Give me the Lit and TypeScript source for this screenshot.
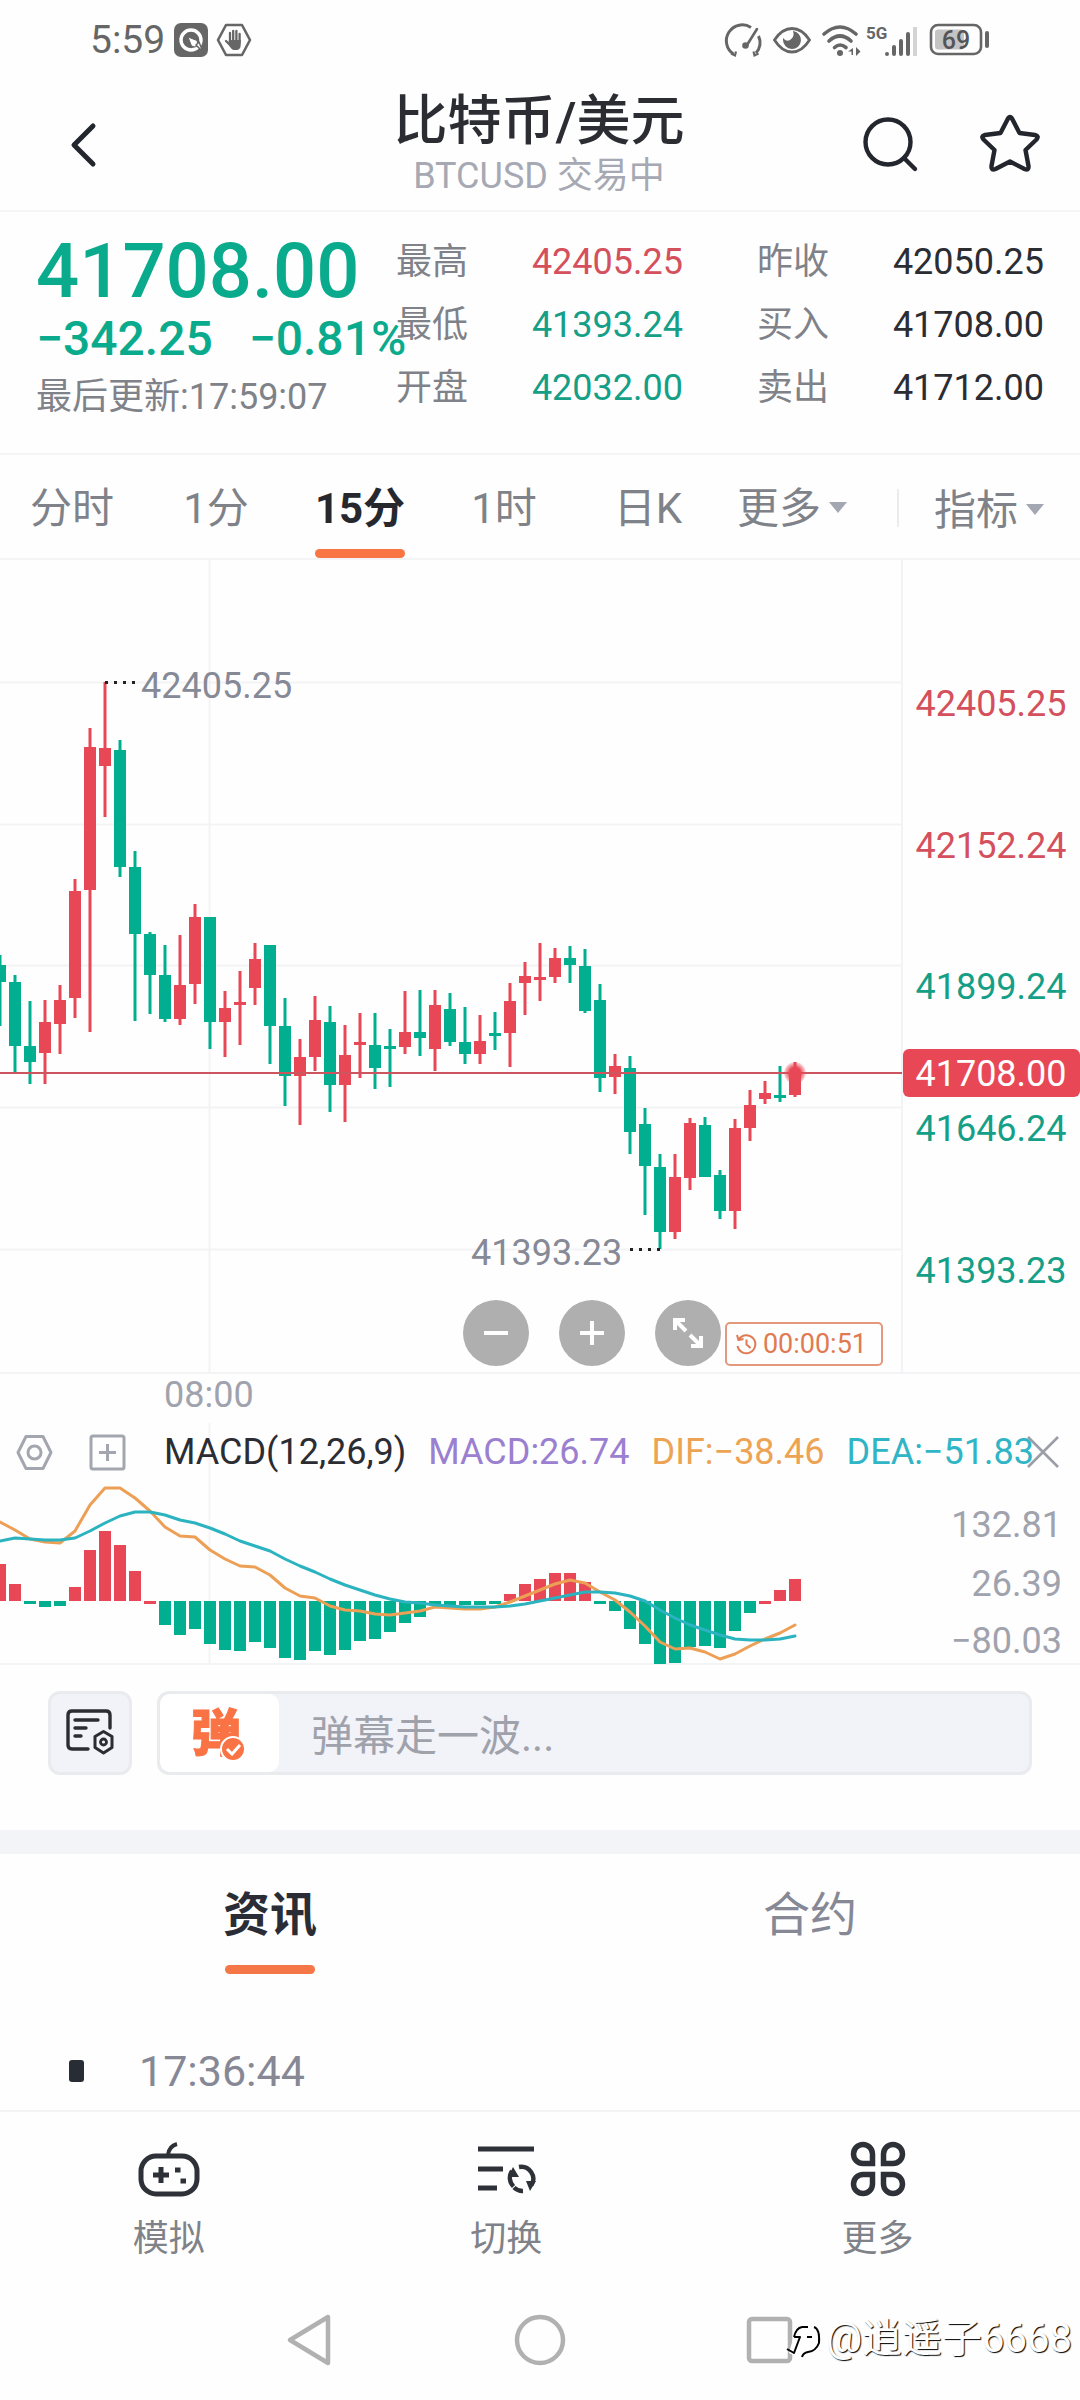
import { LitElement, html, css, svg } from "lit";
import { customElement, property, state } from "lit/decorators.js";
import { classMap } from "lit/directives/class-map.js";

type Candle = [up: 0 | 1, high: number, top: number, bottom: number, low: number];

// Candle edges in thirds of a pixel, measured from PLOT_OFFSET down.
const UNIT = 3;
const PLOT_OFFSET = 80;
const STEP = 15;
const BODY = 12;

const RED = "#e84855";
const GREEN = "#02ae90";

const CANDLES: Candle[] = [
  [0, 945, 975, 1027, 1158], [0, 1005, 1027, 1218, 1296], [0, 1083, 1218, 1266, 1332],
  [1, 1081, 1146, 1239, 1332], [1, 1034, 1079, 1151, 1242], [1, 718, 753, 1074, 1134],
  [1, 264, 320, 750, 1177], [1, 127, 323, 378, 532], [0, 301, 331, 681, 710],
  [0, 633, 680, 883, 1143], [0, 876, 882, 1005, 1123], [0, 915, 1005, 1137, 1146],
  [1, 884, 1034, 1137, 1156], [1, 792, 830, 1031, 1093], [0, 830, 830, 1145, 1228],
  [1, 1054, 1104, 1145, 1252], [1, 993, 1085, 1094, 1215], [1, 909, 956, 1044, 1094],
  [0, 916, 916, 1158, 1271], [0, 1074, 1158, 1308, 1397], [1, 1197, 1252, 1308, 1454],
  [1, 1068, 1140, 1251, 1292], [0, 1098, 1147, 1335, 1415], [1, 1155, 1245, 1335, 1446],
  [1, 1118, 1206, 1214, 1313], [0, 1120, 1215, 1284, 1346], [0, 1167, 1218, 1226, 1342],
  [1, 1052, 1177, 1220, 1242], [0, 1050, 1177, 1194, 1248], [1, 1051, 1095, 1226, 1292],
  [0, 1059, 1108, 1206, 1218], [0, 1101, 1207, 1242, 1273], [1, 1126, 1203, 1242, 1271],
  [0, 1117, 1180, 1188, 1230], [1, 1028, 1083, 1178, 1282], [1, 966, 1008, 1028, 1124],
  [1, 910, 1010, 1017, 1084], [1, 924, 954, 1010, 1029], [0, 918, 954, 976, 1030],
  [0, 928, 977, 1112, 1119], [0, 1032, 1080, 1314, 1356], [1, 1241, 1279, 1310, 1361],
  [0, 1248, 1284, 1475, 1541], [0, 1405, 1452, 1577, 1725], [0, 1542, 1581, 1775, 1828],
  [1, 1542, 1610, 1775, 1796], [1, 1434, 1449, 1614, 1650], [0, 1432, 1454, 1611, 1611],
  [0, 1591, 1604, 1714, 1737], [1, 1437, 1464, 1714, 1768], [1, 1349, 1395, 1464, 1502],
  [1, 1324, 1359, 1377, 1392], [0, 1277, 1365, 1374, 1385], [1, 1267, 1299, 1365, 1371],
];

const HIST = [
  37, 17, -3, -6, -5, 14, 51, 70, 56, 30, -3, -24, -34, -28, -43, -49, -50, -41, -47, -57,
  -59, -50, -54, -49, -40, -38, -31, -22, -16, -4, -4, -4, -4, -3, 7, 17, 22, 28, 28, 19,
  -3, -10, -28, -43, -63, -62, -46, -45, -47, -30, -12, -3, 11, 22,
];
const FADING_RED = new Set([10, 51]);

const DIF = [
  156, 180, 206, 216, 218, 183, 106, 53, 55, 84, 122, 171, 199, 202, 240, 267, 288, 290,
  316, 353, 377, 383, 409, 419, 423, 433, 434, 429, 424, 411, 413, 418, 416, 411, 397, 378,
  360, 342, 331, 338, 367, 389, 425, 467, 516, 536, 533, 546, 567, 551, 528, 508, 489, 466,
];
const DEA = [
  212, 205, 206, 209, 209, 203, 184, 158, 138, 127, 126, 135, 149, 159, 174, 192, 212, 228,
  244, 266, 288, 307, 327, 346, 361, 376, 388, 397, 400, 404, 407, 410, 411, 410, 407, 402,
  394, 385, 374, 366, 366, 369, 379, 394, 419, 445, 465, 479, 494, 506, 511, 511, 507, 498,
];

const sharedFont = css`
  :host {
    font-family: Roboto, "Noto Sans CJK SC", sans-serif;
    color: #2b2d33;
  }
  button {
    font: inherit;
    color: inherit;
    background: none;
    border: 0;
    padding: 0;
    margin: 0;
    cursor: pointer;
  }
  svg {
    display: block;
    overflow: visible;
  }
`;

@customElement("status-bar")
class StatusBar extends LitElement {
  static styles = [
    sharedFont,
    css`
      :host {
        display: block;
      }
      .bar {
        display: flex;
        align-items: center;
        justify-content: space-between;
        height: 80px;
        padding: 0 90px;
        box-sizing: border-box;
        color: #666;
      }
      .side {
        display: flex;
        align-items: center;
        gap: 9px;
      }
      .icons {
        gap: 11px;
      }
      .time {
        font-size: 39px;
        line-height: 80px;
      }
      .level {
        font-size: 25px;
        font-weight: 500;
      }
      .net {
        font-size: 17px;
        font-weight: 700;
      }
    `,
  ];
  render() {
    return html`
      <div class="bar">
        <div class="side">
          <span class="time">5:59</span>
          <svg width="34" height="34" viewBox="0 0 34 34">
            <rect width="34" height="34" rx="7" fill="#666" />
            <circle cx="17" cy="17" r="10" fill="none" stroke="#fff" stroke-width="3.4" />
            <path d="M14 14l9 3.500 1 5-3 1.500-3.500-1z" fill="#fff" stroke="#666" stroke-width="1" />
            <path d="M22 22l3-3 4 10z" fill="#fff" stroke="#666" stroke-width="1.500" />
          </svg>
          <svg width="34" height="34" viewBox="0 0 34 34">
            <path d="M9 2h16l8 15-8 15H9L1 17z" fill="none" stroke="#666" stroke-width="2.600" stroke-linejoin="round" />
            <path d="M13 20V10M16.200 18V8M19.400 18V8M22.600 19V11M9 18l4 4" stroke="#666" stroke-width="2.300" stroke-linecap="round" />
            <path d="M11.800 17h12v4q0 6-4.500 6h-2.300q-2.500 0-5.200-5z" fill="#666" />
          </svg>
        </div>
        <div class="side icons">
          <svg width="35" height="34" viewBox="0 0 35 34" fill="none" stroke="#666" stroke-width="3">
            <path d="M6.500 31A15 15 0 0 1 24 4.500M31.500 13A15 15 0 0 1 29 30" />
            <path d="M4 30.500l4 2 1-4M31.500 30.500l-4 2-1-4" stroke-width="2.200" />
            <path d="M30 6l-10 16" stroke-width="2.600" stroke-linecap="round" />
            <circle cx="18.500" cy="22.500" r="3.300" fill="#666" stroke="none" />
          </svg>
          <svg width="38" height="34" viewBox="0 0 38 34">
            <path d="M1.500 17Q9 5.500 19 5.500T36.500 17Q29 29 19 29T1.500 17z" fill="none" stroke="#666" stroke-width="2.800" />
            <path d="M20 8a9 9 0 1 1-10 9q0 0 0-2 3 4 7 2 5-3 3-9z" fill="#666" />
          </svg>
          <svg width="96" height="34" viewBox="0 0 96 34">
            <g fill="none" stroke="#666" stroke-width="3.600" stroke-linecap="round">
              <path d="M2 11Q18-3 34 11M7 18Q18 8 29 18M12.500 24.500Q18 19.500 24 24.500" />
            </g>
            <circle cx="18" cy="30" r="3" fill="#666" />
            <path d="M31 25v7h-1.500v-3.500H26zM34 24l4.500 4.500L34 33z" fill="#666" />
            <text class="net" x="44" y="16" fill="#666">5G</text>
            <g stroke="#666" stroke-width="4" stroke-linecap="round">
              <path d="M65 31v0M72 24v7M79 18v13M86 11v20" />
            </g>
            <path d="M93 4v29" stroke="#d4d4d4" stroke-width="4" />
          </svg>
          <svg width="61" height="34" viewBox="0 0 61 34">
            <rect x="2" y="2" width="50" height="29" rx="7" fill="none" stroke="#666" stroke-width="2.600" />
            <rect x="6" y="6.500" width="29" height="20" rx="3" fill="#c4c4c4" />
            <text class="level" x="27" y="26" text-anchor="middle" fill="#555">69</text>
            <path d="M58 10v13" stroke="#666" stroke-width="4" stroke-linecap="round" />
          </svg>
        </div>
      </div>
    `;
  }
}

@customElement("title-bar")
class TitleBar extends LitElement {
  static styles = [
    sharedFont,
    css`
      :host {
        display: block;
      }
      .bar {
        display: grid;
        grid-template-columns: 1fr auto 1fr;
        align-items: center;
        height: 130px;
        padding: 0 38px 0 36px;
        border-bottom: 2px solid #f5f5f5;
      }
      .titles {
        text-align: center;
        padding-bottom: 3px;
      }
      .name {
        margin: 0;
        font-size: 54px;
        line-height: 64px;
        font-weight: 500;
      }
      .code {
        margin: 0;
        font-size: 36px;
        line-height: 44px;
        color: #a6a9b3;
      }
      .back {
        justify-self: start;
      }
      .tools {
        justify-self: end;
        display: flex;
        gap: 56px;
      }
    `,
  ];
  render() {
    return html`
      <header class="bar">
        <button class="back" aria-label="返回">
          <svg width="64" height="64" viewBox="0 0 64 64" fill="none" stroke="#23262d" stroke-width="5" stroke-linecap="round" stroke-linejoin="round">
            <path d="M57 13L38 32l19 19" />
          </svg>
        </button>
        <div class="titles">
          <h1 class="name">比特币/美元</h1>
          <p class="code">BTCUSD 交易中</p>
        </div>
        <div class="tools">
          <button aria-label="搜索">
            <svg width="64" height="64" viewBox="0 0 64 64" fill="none" stroke="#23262d" stroke-width="4.400" stroke-linecap="round">
              <circle cx="30" cy="29" r="22.500" />
              <path d="M46 45l11 11" />
            </svg>
          </button>
          <button aria-label="自选">
            <svg width="64" height="64" viewBox="0 0 64 64" fill="none" stroke="#23262d" stroke-width="4.400" stroke-linejoin="round">
              <path d="M29.500 6.500Q32 1.500 34.500 6.500L41.500 20 57 22Q61.500 23 58.500 26.500L47.500 37 50.500 53Q51 58 46.500 56L32 48.500 17.500 56Q13 58 13.500 53L16.500 37 5.500 26.500Q2.500 23 7 22L22.500 20z" />
            </svg>
          </button>
        </div>
      </header>
    `;
  }
}

@customElement("quote-panel")
class QuotePanel extends LitElement {
  static styles = [
    sharedFont,
    css`
      :host {
        display: block;
      }
      .panel {
        display: flex;
        padding: 21px 36px 28px;
        border-bottom: 2px solid #f5f5f5;
      }
      .main {
        flex: 0 0 360px;
        min-width: 0;
        white-space: nowrap;
        color: #0aab8d;
      }
      .price {
        font-size: 76px;
        line-height: 76px;
        font-weight: 500;
      }
      .change {
        display: flex;
        gap: 36px;
        font-size: 48px;
        line-height: 60px;
        font-weight: 500;
      }
      .updated {
        font-size: 36px;
        line-height: 56px;
        color: #7f8288;
      }
      .stats {
        flex: 1;
        display: grid;
        grid-template-columns: 1fr 1fr;
        column-gap: 74px;
        align-content: start;
        margin: -2px 0 0;
        font-size: 36px;
        line-height: 63px;
      }
      .stat {
        display: flex;
        justify-content: space-between;
      }
      .label {
        color: #7f8288;
      }
      .value {
        margin: 0;
      }
      .up {
        color: #d4505c;
      }
      .down {
        color: #159f87;
      }
    `,
  ];
  private stats = [
    ["最高", "42405.25", "up"],
    ["昨收", "42050.25", ""],
    ["最低", "41393.24", "down"],
    ["买入", "41708.00", ""],
    ["开盘", "42032.00", "down"],
    ["卖出", "41712.00", ""],
  ];
  render() {
    return html`
      <section class="panel">
        <div class="main">
          <div class="price">41708.00</div>
          <div class="change"><span>−342.25</span><span>−0.81%</span></div>
          <div class="updated">最后更新:17:59:07</div>
        </div>
        <dl class="stats">
          ${this.stats.map(
            ([label, value, tone]) => html`
              <div class="stat">
                <dt class="label">${label}</dt>
                <dd class=${classMap({ value: true, up: tone === "up", down: tone === "down" })}>${value}</dd>
              </div>
            `
          )}
        </dl>
      </section>
    `;
  }
}

@customElement("period-tabs")
class PeriodTabs extends LitElement {
  @state() private active = "15分";
  static styles = [
    sharedFont,
    css`
      :host {
        display: block;
      }
      .row {
        display: grid;
        grid-template-columns: repeat(6, 4fr) 6fr;
        height: 103px;
        border-bottom: 2px solid #f3f4f5;
        font-size: 42px;
        color: #7f8288;
      }
      .tab {
        display: flex;
        flex-direction: column;
        align-items: center;
        justify-content: space-between;
      }
      .text {
        display: flex;
        align-items: center;
        gap: 8px;
        padding-top: 24px;
        line-height: 60px;
      }
      .bar {
        width: 90px;
        height: 9px;
        border-radius: 5px;
      }
      .active {
        color: #26282e;
        font-weight: 700;
      }
      .active .bar {
        background: #fa7544;
      }
      .index {
        display: flex;
        align-items: flex-start;
        justify-content: space-between;
        padding: 0 36px 0 33px;
      }
      .rule {
        width: 2px;
        height: 38px;
        margin-top: 34px;
        background: #ececee;
      }
      .caret {
        border: 9px solid transparent;
        border-top: 11px solid #a3a7b2;
        border-bottom: 0;
        margin-top: -4px;
      }
      .lower {
        padding-top: 26px;
      }
    `,
  ];
  render() {
    return html`
      <nav class="row">
        ${["分时", "1分", "15分", "1时", "日K", "更多"].map(
          (name) => html`
            <button
              class=${classMap({ tab: true, active: name === this.active })}
              @click=${() => (this.active = name)}
            >
              <span class="text">${name}${name === "更多" ? html`<i class="caret"></i>` : ""}</span>
              <span class="bar"></span>
            </button>
          `
        )}
        <div class="index">
          <span class="rule"></span>
          <button class="text lower">指标<i class="caret"></i></button>
        </div>
      </nav>
    `;
  }
}

@customElement("price-chart")
class PriceChart extends LitElement {
  static styles = [
    sharedFont,
    css`
      :host {
        display: block;
      }
      .stack {
        display: grid;
        grid-template-columns: minmax(0, 1fr);
        border-bottom: 2px solid #f3f4f6;
      }
      .plot {
        grid-area: 1 / 1;
        width: 100%;
        height: auto;
        overflow: hidden;
      }
      .label {
        font-size: 36px;
      }
      .tools {
        grid-area: 1 / 1;
        align-self: end;
        justify-self: end;
        display: flex;
        align-items: flex-end;
        gap: 30px;
        margin: 0 197px 6px 0;
      }
      .round {
        width: 66px;
        height: 66px;
        border-radius: 50%;
        background: #afafaf;
      }
      .end {
        display: flex;
        align-items: flex-end;
        gap: 4px;
      }
      .timer {
        display: flex;
        align-items: center;
        gap: 6px;
        height: 40px;
        padding: 0 14px 0 8px;
        border: 2px solid #e39a7c;
        border-radius: 5px;
        font-size: 27px;
        color: #e07a52;
      }
      .axis {
        height: 49px;
        padding-left: 164px;
        font-size: 36px;
        line-height: 42px;
        color: #a0a3ad;
      }
    `,
  ];
  private y(v: number) {
    return Math.round(v / UNIT) + PLOT_OFFSET;
  }
  private candle([up, high, top, bottom, low]: Candle, i: number) {
    const fill = up ? RED : GREEN;
    const x = i * STEP;
    const t = this.y(top);
    return svg`
      <rect x=${x - 1.5} y=${this.y(high)} width="3" height=${this.y(low) - this.y(high)} fill=${fill} />
      <rect x=${x - BODY / 2} y=${t} width=${BODY} height=${Math.max(3, this.y(bottom) - t)} fill=${fill} />
    `;
  }
  render() {
    const lines = [122, 264, 405, 547, 689];
    const prices: [string, string][] = [
      ["42405.25", "#d4505c"],
      ["42152.24", "#d4505c"],
      ["41899.24", "#159f87"],
      ["41646.24", "#159f87"],
      ["41393.23", "#159f87"],
    ];
    return html`
      <section>
        <div class="stack">
          <svg class="plot" viewBox="0 0 1080 812" role="img" aria-label="K线图">
            <defs>
              <radialGradient id="pulse">
                <stop offset="0.500" stop-color=${RED} />
                <stop offset="1" stop-color=${RED} stop-opacity="0.150" />
              </radialGradient>
            </defs>
            <g stroke="#f3f3f5" stroke-width="2">
              ${lines.map((y) => svg`<path d="M0 ${y}.5H902" />`)}
              <path d="M209.500 0V812M902 0V812" />
            </g>
            ${CANDLES.map((c, i) => this.candle(c, i))}
            <path d="M0 513H902" stroke="#cc5560" stroke-width="2" />
            <circle cx="795" cy="513" r="11" fill="url(#pulse)" />
            <path d="M105 122.500H136M630 689.500H661" stroke="#222" stroke-width="3" stroke-dasharray="3 6" />
            <g class="label" fill="#868996">
              <text x="141" y="138">42405.25</text>
              <text x="471" y="705">41393.23</text>
            </g>
            ${prices.map(
              ([p, c], i) => svg`<text class="label" x="991" y=${lines[i] + 34} text-anchor="middle" fill=${c}>${p}</text>`
            )}
            <rect x="903" y="489" width="177" height="48" rx="6" fill=${RED} />
            <text class="label" x="991" y="526" text-anchor="middle" fill="#fff">41708.00</text>
          </svg>
          <div class="tools">
            <button class="round" aria-label="缩小">
              <svg viewBox="0 0 66 66" stroke="#fff" stroke-width="4"><path d="M21 33H45" /></svg>
            </button>
            <button class="round" aria-label="放大">
              <svg viewBox="0 0 66 66" stroke="#fff" stroke-width="4"><path d="M21 33H45M33 21V45" /></svg>
            </button>
            <div class="end">
              <button class="round" aria-label="全屏">
                <svg viewBox="0 0 66 66" fill="none" stroke="#fff" stroke-width="4">
                  <path d="M20 30V20H30M20 20L31 31M35 35L46 46M36 46H46V36" />
                </svg>
              </button>
              <div class="timer">
                <svg width="22" height="22" viewBox="0 0 22 22" fill="none" stroke="#e07a52" stroke-width="2">
                  <path d="M4 6a9 9 0 1 1-1.500 7M2 2l1.500 5 5-1M11.500 6.500v5l4 3.500" />
                </svg>
                <span>00:00:51</span>
              </div>
            </div>
          </div>
        </div>
        <div class="axis">08:00</div>
      </section>
    `;
  }
}

@customElement("macd-chart")
class MacdChart extends LitElement {
  static styles = [
    sharedFont,
    css`
      :host {
        display: block;
      }
      .stack {
        display: grid;
        grid-template-columns: minmax(0, 1fr);
      }
      .plot {
        grid-area: 1 / 1;
        width: 100%;
        height: auto;
        overflow: hidden;
      }
      .label {
        font-size: 36px;
      }
      .head {
        grid-area: 1 / 1;
        align-self: start;
        z-index: 1;
        display: flex;
        align-items: center;
        height: 58px;
        padding: 0 21px 0 16px;
        font-size: 36px;
        white-space: nowrap;
      }
      .icons {
        display: flex;
        gap: 36px;
        flex: 0 0 148px;
      }
      .values {
        display: flex;
        gap: 22px;
        flex: 1;
        min-width: 0;
      }
      .macd {
        color: #9b7fd0;
      }
      .dif {
        color: #eda354;
      }
      .dea {
        color: #2fb5c5;
      }
      .close {
        flex: none;
      }
    `,
  ];
  private line(values: number[]) {
    return values.map((v, i) => `${i * STEP},${Math.round(v / UNIT) + 47}`).join(" ");
  }
  render() {
    const zero = 178;
    return html`
      <section class="stack">
        <div class="head">
          <div class="icons">
            <button aria-label="设置">
              <svg width="37" height="37" viewBox="0 0 37 37" fill="none" stroke="#a3a6ae" stroke-width="3">
                <path d="M10 2.500h17l8 16-8 16H10l-8-16z" stroke-linejoin="round" />
                <circle cx="18.500" cy="18.500" r="6.500" />
              </svg>
            </button>
            <button aria-label="添加指标">
              <svg width="37" height="37" viewBox="0 0 37 37" fill="none" stroke="#a3a6ae" stroke-width="3">
                <rect x="2" y="2" width="33" height="33" rx="2" />
                <path d="M10 18.500H27M18.500 10V27" />
              </svg>
            </button>
          </div>
          <div class="values">
            <span>MACD(12,26,9)</span>
            <span class="macd">MACD:26.74</span>
            <span class="dif">DIF:−38.46</span>
            <span class="dea">DEA:−51.83</span>
          </div>
          <button class="close" aria-label="关闭">
            <svg width="32" height="32" viewBox="0 0 32 32" stroke="#9b9ea6" stroke-width="2.600"><path d="M1 1L31 31M31 1L1 31" /></svg>
          </button>
        </div>
        <svg class="plot" viewBox="0 0 1080 242" role="img" aria-label="MACD">
          <path d="M0 241H1080M209.500 0V241" stroke="#f3f4f6" stroke-width="2" />
          ${HIST.map(
            (h, i) => svg`<rect x=${i * STEP - BODY / 2} y=${h > 0 ? zero - h : zero} width=${BODY} height=${Math.abs(h)}
              fill=${h > 0 || FADING_RED.has(i) ? RED : GREEN} />`
          )}
          <g fill="none" stroke-width="3" stroke-linejoin="round" stroke-linecap="round">
            <polyline points=${this.line(DIF)} stroke="#ec9f55" />
            <polyline points=${this.line(DEA)} stroke="#2bb3c0" />
          </g>
          <g class="label" fill="#a0a3ad" text-anchor="end">
            <text x="1062" y="114">132.81</text>
            <text x="1062" y="173">26.39</text>
            <text x="1062" y="230">−80.03</text>
          </g>
        </svg>
      </section>
    `;
  }
}

@customElement("barrage-bar")
class BarrageBar extends LitElement {
  static styles = [
    sharedFont,
    css`
      :host {
        display: block;
      }
      .row {
        display: flex;
        gap: 25px;
        padding: 26px 48px 55px;
        border-bottom: 24px solid #f3f4f8;
      }
      .note,
      .box {
        height: 84px;
        box-sizing: border-box;
        border: 3px solid #e9ebef;
        border-radius: 12px;
        background: #f2f3f8;
      }
      .note {
        flex: 0 0 84px;
        display: grid;
        place-items: center;
      }
      .box {
        flex: 1;
        display: flex;
        overflow: hidden;
      }
      .toggle {
        flex: 0 0 119px;
        display: grid;
        place-items: center;
        background: #fff;
        border-radius: 10px;
      }
      .logo {
        font-size: 50px;
        font-weight: 900;
      }
      .input {
        flex: 1;
        min-width: 0;
        border: 0;
        outline: 0;
        background: none;
        padding: 6px 32px 0;
        font: inherit;
        font-size: 42px;
        color: #2b2d33;
      }
      .input::placeholder {
        color: #9fa2ab;
        opacity: 1;
      }
    `,
  ];
  render() {
    return html`
      <section class="row">
        <button class="note" aria-label="弹幕设置">
          <svg width="50" height="50" viewBox="0 0 50 50" fill="none" stroke="#2b2d33" stroke-width="3.400" stroke-linecap="round" stroke-linejoin="round">
            <path d="M23 41H7q-4 0-4-4V7q0-4 4-4H41q4 0 4 4V20" />
            <path d="M10 12H33M10 20H21M10 28H16" />
            <path d="M38.500 23.500L47 28.500V39.500L38.500 45 30 39.500V28.500z" stroke-width="3" />
            <circle cx="38.500" cy="34" r="3" stroke-width="2.800" />
          </svg>
        </button>
        <div class="box">
          <button class="toggle" aria-label="弹幕开关">
            <svg width="58" height="60" viewBox="0 0 58 60">
              <text class="logo" x="0" y="48" fill="#f97344" stroke="#f97344">弹</text>
              <circle cx="42" cy="46" r="12" fill="#f97344" stroke="#fff" stroke-width="2" />
              <path d="M36 46l5 5 8-9" fill="none" stroke="#fff" stroke-width="3" />
            </svg>
          </button>
          <input class="input" type="text" placeholder="弹幕走一波..." aria-label="弹幕" />
        </div>
      </section>
    `;
  }
}

@customElement("news-feed")
class NewsFeed extends LitElement {
  @property() active = "资讯";
  static styles = [
    sharedFont,
    css`
      :host {
        display: block;
      }
      .tabs {
        display: grid;
        grid-template-columns: 1fr 1fr;
        font-size: 47px;
        line-height: 68px;
        color: #868896;
      }
      .tab {
        display: flex;
        flex-direction: column;
        align-items: center;
        gap: 16px;
        padding-top: 27px;
      }
      .bar {
        width: 90px;
        height: 9px;
        border-radius: 5px;
      }
      .active {
        color: #2b2d36;
        font-weight: 700;
      }
      .active .bar {
        background: #f57747;
      }
      .item {
        display: flex;
        align-items: center;
        gap: 55px;
        padding: 67px 69px 9px;
        font-size: 43px;
        line-height: 60px;
        color: #868896;
      }
      .dot {
        width: 15px;
        height: 22px;
        border-radius: 3px;
        background: #272c35;
      }
    `,
  ];
  render() {
    return html`
      <section>
        <div class="tabs">
          ${["资讯", "合约"].map(
            (t) => html`
              <button class=${classMap({ tab: true, active: t === this.active })} @click=${() => (this.active = t)}>
                <span>${t}</span><span class="bar"></span>
              </button>
            `
          )}
        </div>
        <div class="item"><span class="dot"></span><time>17:36:44</time></div>
      </section>
    `;
  }
}

@customElement("action-bar")
class ActionBar extends LitElement {
  static styles = [
    sharedFont,
    css`
      :host {
        display: block;
      }
      .row {
        display: grid;
        grid-template-columns: 5fr 5fr 6fr;
        height: 158px;
        border-top: 2px solid #f3f3f3;
        font-size: 36px;
        line-height: 52px;
        color: #7f8288;
      }
      .action {
        display: flex;
        flex-direction: column;
        align-items: center;
        gap: 13px;
        padding-top: 24px;
      }
    `,
  ];
  render() {
    const ink = "#2e3137";
    return html`
      <nav class="row">
        <button class="action">
          <svg width="64" height="64" viewBox="0 0 64 64" fill="none" stroke=${ink} stroke-width="5">
            <rect x="4" y="20" width="56" height="38" rx="15" />
            <path d="M31 19q1-9 9-11" stroke-width="4" />
            <path d="M16 39H32M24 31V47" />
            <path d="M38 34h5.500M43.500 45h5.500" />
          </svg>
          <span>模拟</span>
        </button>
        <button class="action">
          <svg width="64" height="64" viewBox="0 0 64 64" fill="none" stroke=${ink} stroke-width="5">
            <path d="M4 13H60M4 33H29M4 52H23" />
            <path d="M39.500 50.500A12 12 0 0 1 38 35M45 31A12 12 0 0 1 57.500 49M40 51.500A12 12 0 0 0 49 55" stroke-width="4.400" />
            <path d="M34 41l5-10 6 10zM52 45h10l-6 10z" fill=${ink} stroke="none" />
          </svg>
          <span>切换</span>
        </button>
        <button class="action">
          <svg width="64" height="64" viewBox="0 0 64 64" fill="none" stroke=${ink} stroke-width="5.500">
            <path d="M26.500 27.500H17A9.500 9.500 0 1 1 26.500 18zM37.500 27.500H47A9.500 9.500 0 1 0 37.500 18zM26.500 38.500H17A9.500 9.500 0 1 0 26.500 48zM37.500 38.500H47A9.500 9.500 0 1 1 37.500 48z" />
          </svg>
          <span>更多</span>
        </button>
      </nav>
    `;
  }
}

@customElement("system-nav")
class SystemNav extends LitElement {
  static styles = [
    sharedFont,
    css`
      :host {
        display: block;
      }
      .row {
        position: relative;
        display: flex;
        justify-content: center;
        align-items: center;
        gap: 174px;
        height: 130px;
        padding-top: 10px;
        box-sizing: border-box;
      }
      .mark {
        position: absolute;
        right: 8px;
        top: 42px;
        display: flex;
        align-items: center;
        gap: 4px;
        font-size: 40px;
        line-height: 54px;
        color: #fff;
        text-shadow: 1px 1px 1px #000;
      }
    `,
  ];
  render() {
    return html`
      <footer class="row">
        <button aria-label="后退">
          <svg width="56" height="56" viewBox="0 0 56 56" fill="none" stroke="#b1b1b1" stroke-width="4.500" stroke-linejoin="round"><path d="M46 5V51L8 28z" /></svg>
        </button>
        <button aria-label="主屏幕">
          <svg width="56" height="56" viewBox="0 0 56 56" fill="none" stroke="#b1b1b1" stroke-width="4.500"><circle cx="28" cy="28" r="23" /></svg>
        </button>
        <button aria-label="最近任务">
          <svg width="56" height="56" viewBox="0 0 56 56" fill="none" stroke="#b1b1b1" stroke-width="4.500"><rect x="7" y="7" width="41" height="42" rx="3" /></svg>
        </button>
        <div class="mark">
          <svg width="36" height="40" viewBox="0 0 36 40" fill="none" stroke-linejoin="round">
            <path d="M3 34L11 6Q20 0 30 8 36 30 18 37L12 38z" fill="#fff" />
            <path d="M28 8Q34 10 33 24 30 32 22 33 17 34 16 38M8 18Q10 9 16 8H22M8 18H14L8 34 1 30M21 18H26" stroke="#000" stroke-width="2" />
          </svg>
          <span>@逍遥子6668</span>
        </div>
      </footer>
    `;
  }
}

@customElement("app-root")
class AppRoot extends LitElement {
  static styles = css`
    :host {
      display: block;
      background: #fefefe;
    }
  `;
  render() {
    return html`
      <status-bar></status-bar>
      <title-bar></title-bar>
      <quote-panel></quote-panel>
      <period-tabs></period-tabs>
      <price-chart></price-chart>
      <macd-chart></macd-chart>
      <barrage-bar></barrage-bar>
      <news-feed></news-feed>
      <action-bar></action-bar>
      <system-nav></system-nav>
    `;
  }
}
